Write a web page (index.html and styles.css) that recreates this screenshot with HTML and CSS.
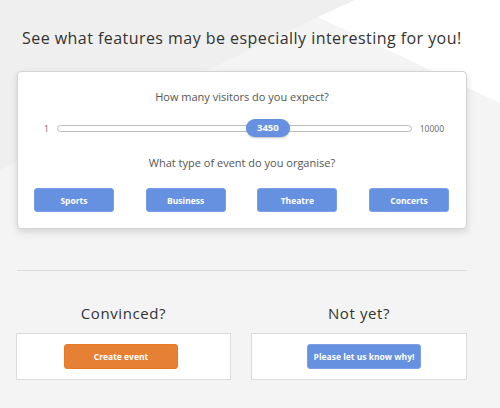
FILE: index.html
```html
<!DOCTYPE html>
<html lang="en">
<head>
<meta charset="utf-8">
<title>Features</title>
<link rel="stylesheet" href="styles.css">
</head>
<body>
<div class="bg-dark"></div>
<div class="bg-light"></div>
<main class="page">
  <h1 class="title">See what features may be especially interesting for you!</h1>
  <section class="card">
    <p class="question">How many visitors do you expect?</p>
    <div class="slider-row">
      <span class="limit">1</span>
      <div class="track">
        <div class="thumb" style="left: 188px;">3450</div>
      </div>
      <span class="limit">10000</span>
    </div>
    <p class="question">What type of event do you organise?</p>
    <div class="types">
      <button class="btn btn-blue type">Sports</button>
      <button class="btn btn-blue type">Business</button>
      <button class="btn btn-blue type">Theatre</button>
      <button class="btn btn-blue type">Concerts</button>
    </div>
  </section>
  <hr class="divider">
  <div class="cta">
    <div class="col">
      <h2 class="cta-title">Convinced?</h2>
      <div class="box box-left"><button class="btn btn-orange action">Create event</button></div>
    </div>
    <div class="col">
      <h2 class="cta-title">Not yet?</h2>
      <div class="box box-right"><button class="btn btn-blue action">Please let us know why!</button></div>
    </div>
  </div>
</main>
</body>
</html>
```
FILE: styles.css
```css
html, body {
  margin: 0;
  padding: 0;
}
body {
  background: #f4f4f4;
  font-family: "Open Sans", "Noto Sans", sans-serif;
  color: #333;
  width: 500px;
  height: 408px;
  overflow: hidden;
  position: relative;
}
.bg-dark {
  position: absolute;
  inset: 0;
  background: #efefef;
  clip-path: polygon(0 0, 355px 0, 318px 17px, 0 170px);
  z-index: 0;
}
.bg-light {
  position: absolute;
  inset: 0;
  background: #ffffff;
  clip-path: polygon(355px 0, 500px 0, 500px 103px, 318px 17px);
  z-index: 0;
}
.page {
  position: relative;
  z-index: 1;
  width: 450px;
  margin-left: 17px;
  padding-top: 26px;
}
.title {
  margin: 0;
  padding-left: 5px;
  font-size: 16px;
  line-height: 24px;
  font-weight: 400;
  letter-spacing: 0.45px;
  color: #333;
  white-space: nowrap;
}
.card {
  margin-top: 21px;
  background: #fff;
  border: 1px solid #d4d4d4;
  border-radius: 4px;
  box-shadow: 0 3px 7px rgba(0, 0, 0, 0.13);
  padding: 17px 16px 16px 16px;
}
.question {
  margin: 0;
  text-align: center;
  font-size: 11px;
  line-height: 16px;
  color: #555;
}
.slider-row {
  display: flex;
  align-items: center;
  height: 18px;
  margin: 14px 0 18px;
  padding: 0 6px 0 10px;
  gap: 8px;
}
.limit {
  font-size: 8.5px;
  color: #666;
}
.track {
  position: relative;
  flex: 1;
  height: 5px;
  border: 1px solid #bcbcbc;
  border-radius: 4px;
  background: #fff;
}
.thumb {
  position: absolute;
  top: -7px;
  width: 44px;
  height: 18px;
  border-radius: 9px;
  background: #6690e0;
  box-shadow: 0 1px 2px rgba(0, 0, 0, 0.25);
  color: #fff;
  font-size: 9.5px;
  font-weight: 700;
  line-height: 18px;
  text-align: center;
}
.types {
  margin-top: 17px;
  display: flex;
  justify-content: space-between;
  padding-right: 1px;
}
.btn {
  font-family: "Open Sans", "Noto Sans", sans-serif;
  color: #fff;
  font-weight: 700;
  font-size: 8.5px;
  border-radius: 3px;
  padding: 0;
  cursor: pointer;
}
.btn-blue {
  background: #6690e0;
  border: 1px solid #7a9fe4;
}
.btn-orange {
  background: #e58035;
  border: 1px solid #e97a22;
}
.type {
  width: 80px;
  height: 24px;
}
.divider {
  margin: 41px 0 0;
  border: 0;
  border-top: 1px solid #dcdcdc;
  height: 0;
}
.cta {
  display: grid;
  grid-template-columns: 215px 216px;
  justify-content: space-between;
  margin-top: 31px;
  margin-left: -1px;
}
.col {
  display: flex;
  flex-direction: column;
}
.cta-title {
  margin: 0 0 9px;
  text-align: center;
  font-size: 15px;
  line-height: 22px;
  font-weight: 400;
  letter-spacing: 0.6px;
  color: #333;
}
.box {
  background: #fff;
  border: 1px solid #dcdcdc;
  padding: 10px 0;
  display: flex;
  justify-content: flex-start;
}
.box-left {
  padding-left: 47px;
}
.box-right {
  padding-left: 55px;
}
.action {
  width: 114px;
  height: 25px;
}
```
